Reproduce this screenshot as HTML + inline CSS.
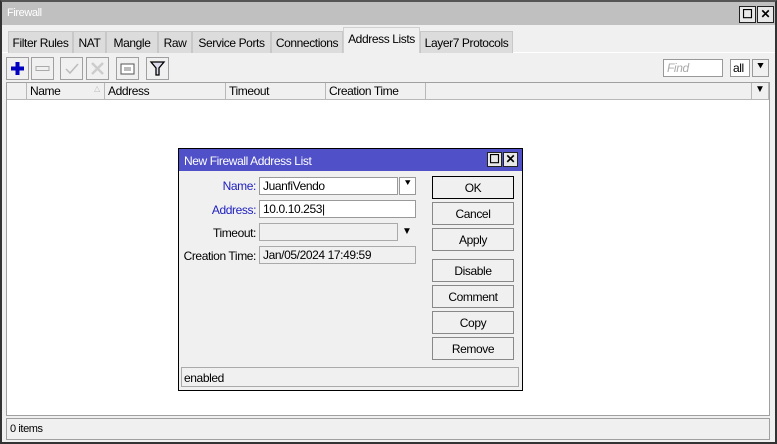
<!DOCTYPE html>
<html><head><style>
*{box-sizing:border-box;margin:0;padding:0}
body{width:777px;height:444px;overflow:hidden;background:#f0f0f0;font-family:"Liberation Sans",sans-serif;font-size:12px;letter-spacing:-0.4px;color:#000;position:relative;white-space:nowrap}
.a{position:absolute}
.win{left:0;top:0;width:777px;height:444px;border:2px solid #333;border-top:2px solid #555;background:#f0f0f0}
.tb{left:2px;top:2px;width:773px;height:23px;background:#c0c0c0;color:#fff;padding:5px 5px;font-size:11px}
.wb{width:17px;height:17px;border:1px solid #222;background:#e8e8e8;text-align:center;font-weight:bold;line-height:14px;letter-spacing:0}
.tab{top:31px;height:22px;background:#dcdcdc;border:1px solid #c8c8c8;border-bottom:none;padding:4px 0 0;text-align:center}
.tab.on{top:27px;height:26px;background:#f0f0f0;border:1px solid #d0d0d0;border-bottom:none;padding-top:4px}
.btn{top:57px;width:23px;height:23px;border:1px solid #a0a0a0;background:#f0f0f0}
.hd{top:83px;height:17px;border-right:1px solid #b8b8b8;border-bottom:1px solid #b8b8b8;background:#f0f0f0;padding:1px 0 0 3px}
.in{height:18px;border:1px solid #999;background:#fff;padding:1px 0 0 3px}
.lbl{text-align:right;width:88px;left:168px}
.db{left:432px;width:82px;height:23px;border:1px solid #888;background:#f0f0f0;text-align:center;padding-top:4px}
</style></head><body>
<div class="a win"></div>
<div class="a tb">Firewall</div>
<div class="a wb" style="left:739px;top:6px">☐</div>
<div class="a wb" style="left:757px;top:6px">✕</div>
<div class="a" style="left:2px;top:52px;width:773px;height:1px;background:#fff"></div>
<div class="a tab" style="left:8px;width:65px">Filter Rules</div>
<div class="a tab" style="left:73px;width:33px">NAT</div>
<div class="a tab" style="left:106px;width:52px">Mangle</div>
<div class="a tab" style="left:158px;width:34px">Raw</div>
<div class="a tab" style="left:192px;width:79px">Service Ports</div>
<div class="a tab" style="left:271px;width:72px">Connections</div>
<div class="a tab on" style="left:343px;width:77px">Address Lists</div>
<div class="a tab" style="left:420px;width:93px">Layer7 Protocols</div>
<div class="a btn" style="left:6px"><svg width="21" height="21"><path d="M10.5 4v13M4 10.5h13" stroke="#0000c0" stroke-width="4"/></svg></div>
<div class="a btn" style="left:31px"><svg width="21" height="21"><rect x="4" y="8.5" width="13" height="4" fill="none" stroke="#aaa"/></svg></div>
<div class="a btn" style="left:60px"><svg width="21" height="21"><path d="M5 11l4 4 8-9" fill="none" stroke="#bbb" stroke-width="1.5"/></svg></div>
<div class="a btn" style="left:86px"><svg width="21" height="21"><path d="M5 5l11 11M16 5L5 16" stroke="#ccc" stroke-width="2.5"/></svg></div>
<div class="a btn" style="left:116px"><svg width="21" height="21"><rect x="4" y="6" width="13" height="10" fill="#fff" stroke="#555"/><path d="M7 10h7M7 12h7" stroke="#777"/></svg></div>
<div class="a btn" style="left:146px"><svg width="21" height="21"><path d="M4 4h13l-5 6v7h-3v-7z" fill="#dde" stroke="#000" stroke-width="1.3"/></svg></div>
<div class="a in" style="left:663px;top:59px;width:60px;color:#aaa;font-style:italic">Find</div>
<div class="a in" style="left:730px;top:59px;width:20px;padding-left:2px">all</div>
<div class="a wb" style="left:752px;top:59px;height:18px;border-color:#999;background:#f0f0f0;font-size:10px">⯆</div>
<div class="a" style="left:6px;top:82px;width:764px;height:334px;background:#fff;border:1px solid #a0a0a0"></div>
<div class="a hd" style="left:7px;width:20px"></div>
<div class="a hd" style="left:27px;width:78px">Name<span style="position:absolute;left:67px;color:#bbb;font-size:8px">△</span></div>
<div class="a hd" style="left:105px;width:121px">Address</div>
<div class="a hd" style="left:226px;width:100px">Timeout</div>
<div class="a hd" style="left:326px;width:100px">Creation Time</div>
<div class="a hd" style="left:426px;width:326px"></div>
<div class="a hd" style="left:752px;width:17px;font-size:10px;padding-left:3px">▼</div>
<div class="a" style="left:6px;top:418px;width:764px;height:22px;border:1px solid #a0a0a0;padding:4px 3px;font-size:11px">0 items</div>

<div class="a" style="left:178px;top:148px;width:345px;height:243px;border:1px solid #000;background:#f0f0f0"></div>
<div class="a" style="left:179px;top:149px;width:343px;height:22px;background:#5050c8;color:#fff;padding:5px 5px">New Firewall Address List</div>
<div class="a wb" style="left:487px;top:152px;width:15px;height:15px;line-height:12px">☐</div>
<div class="a wb" style="left:503px;top:152px;width:15px;height:15px;line-height:12px">✕</div>
<div class="a lbl" style="top:179px;color:#2020c0">Name:</div>
<div class="a lbl" style="top:203px;color:#2020c0">Address:</div>
<div class="a lbl" style="top:226px">Timeout:</div>
<div class="a lbl" style="top:249px">Creation Time:</div>
<div class="a in" style="left:259px;top:177px;width:139px">JuanfiVendo</div>
<div class="a in" style="left:399px;top:177px;width:17px;text-align:center;padding:0;font-size:10px">⯆</div>
<div class="a in" style="left:259px;top:200px;width:157px">10.0.10.253|</div>
<div class="a in" style="left:259px;top:223px;width:139px;background:#f0f0f0;border-color:#aaa"></div>
<div class="a" style="left:402px;top:226px;font-size:10px">▼</div>
<div class="a in" style="left:259px;top:246px;width:157px;background:#f0f0f0;border-color:#aaa">Jan/05/2024 17:49:59</div>
<div class="a db" style="top:176px;border:1px solid #000">OK</div>
<div class="a db" style="top:202px">Cancel</div>
<div class="a db" style="top:228px">Apply</div>
<div class="a db" style="top:259px">Disable</div>
<div class="a db" style="top:285px">Comment</div>
<div class="a db" style="top:311px">Copy</div>
<div class="a db" style="top:337px">Remove</div>
<div class="a" style="left:181px;top:367px;width:338px;height:20px;border:1px solid #aaa;padding:3px 2px">enabled</div>
</body></html>
